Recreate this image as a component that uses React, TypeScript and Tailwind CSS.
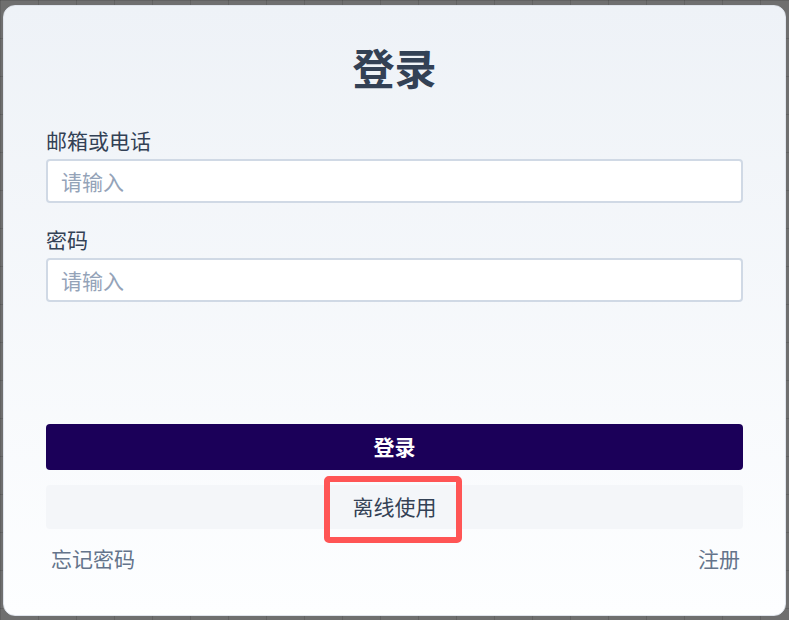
import React from "react";

export default function App() {
  const font = { fontFamily: '"Noto Sans CJK SC", "Noto Sans", sans-serif' };
  return (
    <div
      className="w-[789px] h-[620px] bg-[#6f6f6f] pt-[5px] pl-[3px] pr-[3px] pb-[4px]"
      style={{
        ...font,
        backgroundImage:
          "linear-gradient(to right, rgba(0,0,0,0.12) 1px, transparent 1px), linear-gradient(to bottom, rgba(0,0,0,0.12) 1px, transparent 1px)",
        backgroundSize: "38px 38px",
      }}
    >
      <div className="relative w-[783px] h-[611px] rounded-[12px] border border-[#dfe4ec] bg-gradient-to-b from-[#eef2f7] to-[#fdfeff] px-[42px] pt-[37px] flex flex-col">
        <h1 className="text-center text-[42px] leading-[48px] font-bold text-[#334155]">登录</h1>
        <label className="mt-[35px] text-[21px] leading-[28px] text-[#334155]">邮箱或电话</label>
        <input
          className="mt-[5px] h-[44px] w-full rounded-[4px] border-2 border-[#d0d9e5] bg-white px-[13px] text-[21px] text-[#334155] placeholder:text-[#94a3b8] outline-none"
          placeholder="请输入"
        />
        <label className="mt-[22px] text-[21px] leading-[28px] text-[#334155]">密码</label>
        <input
          type="password"
          className="mt-[5px] h-[44px] w-full rounded-[4px] border-2 border-[#d0d9e5] bg-white px-[13px] text-[21px] text-[#334155] placeholder:text-[#94a3b8] outline-none"
          placeholder="请输入"
        />
        <div className="flex-1" />
        <button className="h-[46px] w-full rounded-[4px] bg-[#1b0059] text-[21px] font-bold text-white">登录</button>
        <div className="relative mt-[15px]">
          <button className="h-[44px] w-full rounded-[4px] bg-[#f4f6f9] text-[21px] text-[#334155]">离线使用</button>
          <div className="absolute left-[278px] top-[-9px] w-[138px] h-[67px] rounded-[5px] border-[6px] border-[#ff5555]" />
        </div>
        <div className="mt-[15px] mb-[43px] flex justify-between pl-[5px] pr-[3px] text-[21px] leading-[28px] text-[#64748b]">
          <span>忘记密码</span>
          <span>注册</span>
        </div>
      </div>
    </div>
  );
}
